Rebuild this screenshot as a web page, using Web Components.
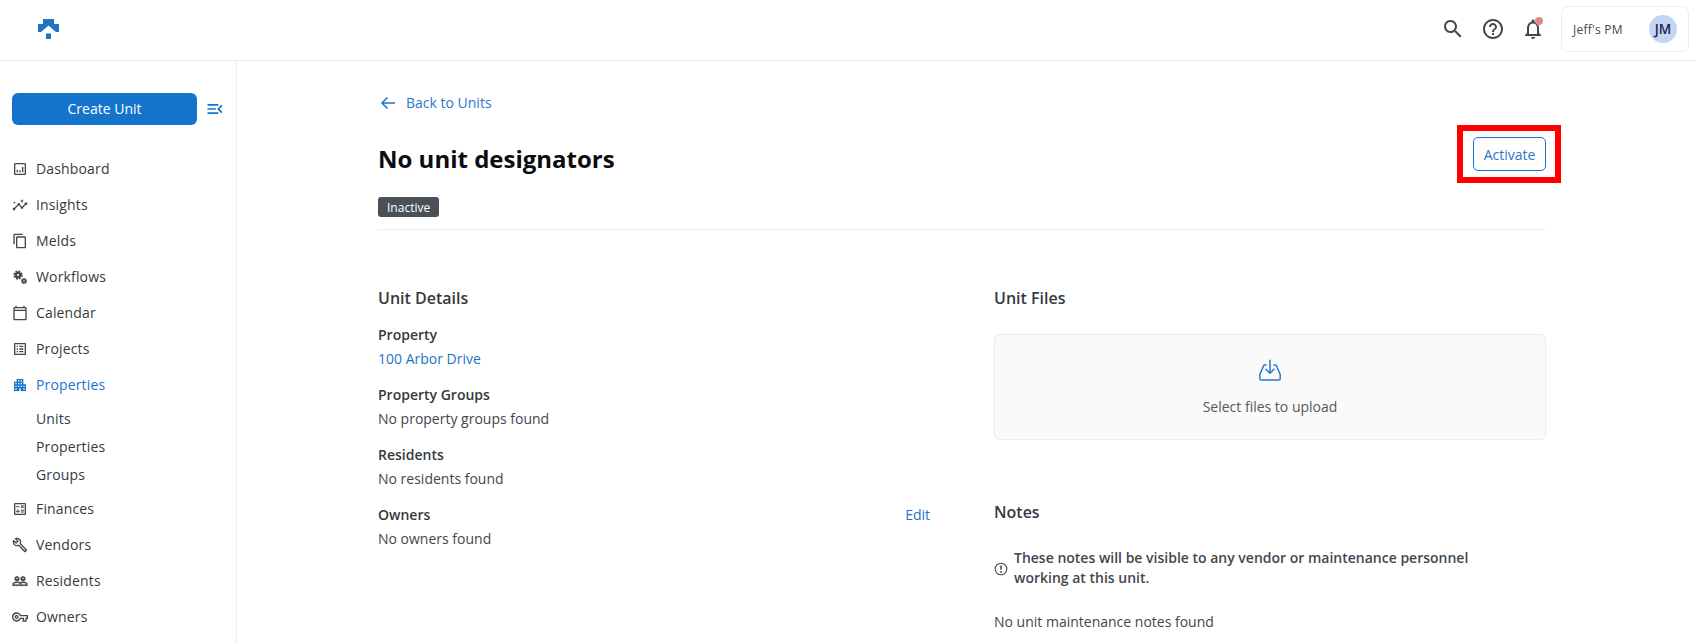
<!DOCTYPE html>
<html lang="en"><head><meta charset="utf-8"><title>Unit</title>
<style>
html,body{margin:0;padding:0;height:643px;overflow:hidden;background:#fff;font-family:"Open Sans",sans-serif;color:#343a40}
</style></head><body>
<app-shell></app-shell>
<template id="t-shell"><style>
:host{display:grid;grid-template-columns:237px 1fr;grid-template-rows:61px 582px;width:1696px;height:643px;overflow:hidden}
app-header{grid-column:1/3}
</style><app-header></app-header><app-sidebar></app-sidebar><unit-page></unit-page></template>

<template id="t-header"><style>
:host{display:flex;align-items:center;height:61px;box-sizing:border-box;border-bottom:1px solid #ebebeb;padding:0 7px 0 38px;background:#fff}
.logo{display:block;width:21px;height:21px;margin-top:-1px}
.sp{flex:1}
.icons{display:flex;gap:16px;margin:-2px 16px 0 0}
svg.i{display:block;fill:#42474d}
.b{position:relative;width:24px;height:24px}
.dot{position:absolute;left:14px;top:0;width:8px;height:8px;border-radius:50%;background:#e58585}
.user{width:128px;height:46px;box-sizing:border-box;border:1px solid #ececec;border-radius:7px;display:flex;align-items:center;justify-content:space-between;padding:0 11px 0 11px;font-size:12px;letter-spacing:.25px;color:#42474d;margin-top:-2px}
.av{width:28px;height:28px;border-radius:50%;background:#c5d4f2;color:#1a1f4f;font-weight:600;font-size:13.5px;letter-spacing:0;display:flex;align-items:center;justify-content:center}
</style>
<svg class="logo" viewBox="0 0 21 21"><path fill="#1e74c0" d="M5 5V0h11v5h5v8h-3l-7.500-6.500L3 13H0V5z"/><path fill="#1e74c0" d="M8 14.500h5V20H8z"/></svg>
<span class="sp"></span>
<div class="icons">
<svg class="i" width="24" height="24" viewBox="0 0 24 24"><path d="M15.500 14h-.79l-.28-.27C15.410 12.590 16 11.110 16 9.500 16 5.910 13.090 3 9.500 3S3 5.910 3 9.500 5.910 16 9.500 16c1.610 0 3.090-.59 4.230-1.570l.27.28v.79l5 4.990L20.490 19l-4.990-5zm-6 0C7.010 14 5 11.990 5 9.500S7.010 5 9.500 5 14 7.010 14 9.500 11.990 14 9.500 14z"/></svg>
<svg class="i" width="24" height="24" viewBox="0 0 24 24"><path d="M11 18h2v-2h-2v2zm1-16C6.480 2 2 6.480 2 12s4.480 10 10 10 10-4.480 10-10S17.520 2 12 2zm0 18c-4.410 0-8-3.590-8-8s3.590-8 8-8 8 3.590 8 8-3.590 8-8 8zm0-14c-2.210 0-4 1.790-4 4h2c0-1.100.9-2 2-2s2 .9 2 2c0 2-3 1.750-3 5h2c0-2.250 3-2.500 3-5 0-2.210-1.790-4-4-4z"/></svg>
<div class="b"><svg class="i" width="24" height="24" viewBox="0 0 24 24"><path d="M12 22c1.100 0 2-.9 2-2h-4c0 1.100.9 2 2 2zm6-6v-5c0-3.070-1.630-5.640-4.500-6.320V4c0-.83-.67-1.500-1.500-1.500s-1.500.67-1.500 1.500v.68C7.640 5.360 6 7.920 6 11v5l-2 2v1h16v-1l-2-2zm-2 1H8v-6c0-2.480 1.510-4.500 4-4.500s4 2.020 4 4.500v6z"/></svg><span class="dot"></span></div>
</div>
<div class="user"><span>Jeff's PM</span><span class="av">JM</span></div>
</template>

<template id="t-nav"><style>
:host{display:flex;align-items:center;height:36px;font-size:14px;line-height:20px;letter-spacing:.15px;font-weight:500;color:#343a40}
:host([active]){color:#1c74cc}
.ic{width:16px;height:16px;margin:0 8px 0 12px;flex:none;display:flex}
</style><span class="ic"><slot name="icon"></slot></span><slot></slot></template>

<template id="t-sub"><style>
:host{display:flex;align-items:center;height:28px;padding-left:36px;font-size:14px;line-height:20px;letter-spacing:.15px;font-weight:500;color:#343a40}
</style><slot></slot></template>

<template id="t-side"><style>
:host{display:block;border-right:1px solid #ebebeb;overflow:hidden;background:#fff}
.top{display:flex;align-items:center;margin:32px 0 26px 12px}
.btn{width:185px;height:32px;border-radius:6px;background:#1474cc;color:#fff;font-size:14px;line-height:20px;font-weight:500;display:flex;align-items:center;justify-content:center}
.col{margin-left:8px;display:block;fill:#1474cc}
svg{display:block}
.subs{margin:2px 0}
.ic{fill:#42474d}
</style>
<div class="top"><div class="btn">Create Unit</div>
<svg class="col" width="20" height="20" viewBox="0 0 24 24"><path d="M3 18h13v-2H3v2zm0-5h10v-2H3v2zm0-7v2h13V6H3zm18 9.590L17.420 12 21 8.410 19.590 7l-5 5 5 5L21 15.590z"/></svg></div>
<nav-item><svg slot="icon" class="ic" width="16" height="16" viewBox="0 0 24 24"><path d="M19 3H5c-1.100 0-2 .9-2 2v14c0 1.100.9 2 2 2h14c1.100 0 2-.9 2-2V5c0-1.100-.9-2-2-2zm0 16H5V5h14v14zM7 13h2v4H7zm4 1h2v3h-2zm4-5h2v8h-2z"/></svg>Dashboard</nav-item>
<nav-item><svg slot="icon" class="ic" width="16" height="16" viewBox="0 0 24 24"><path d="M21 8c-1.450 0-2.260 1.440-1.930 2.510l-3.550 3.560c-.3-.09-.74-.09-1.040 0l-2.550-2.550C12.270 10.450 11.460 9 10 9c-1.450 0-2.270 1.440-1.930 2.520l-4.560 4.550C2.440 15.740 1 16.550 1 18c0 1.100.9 2 2 2 1.450 0 2.260-1.440 1.930-2.510l4.550-4.560c.3.09.74.09 1.040 0l2.550 2.550C12.730 16.550 13.540 18 15 18c1.450 0 2.270-1.440 1.930-2.520l3.560-3.550c1.070.33 2.510-.48 2.510-1.930 0-1.100-.9-2-2-2z"/><path d="M15 9l.94-2.070L18 6l-2.060-.93L15 3l-.92 2.070L12 6l2.080.93zM3.500 11L4 9l2-.5L4 8l-.5-2L3 8l-2 .5L3 9z"/></svg>Insights</nav-item>
<nav-item><svg slot="icon" class="ic" width="16" height="16" viewBox="0 0 24 24"><path d="M16 1H4c-1.100 0-2 .9-2 2v14h2V3h12V1zm3 4H8c-1.100 0-2 .9-2 2v14c0 1.100.9 2 2 2h11c1.100 0 2-.9 2-2V7c0-1.100-.9-2-2-2zm0 16H8V7h11v14z"/></svg>Melds</nav-item>
<nav-item><svg slot="icon" width="16" height="16" viewBox="0 0 16 16"><g fill="none" stroke="#42474d"><circle cx="6" cy="6" r="3.800" stroke-width="1.700" stroke-dasharray="1.900 1.080"/><circle cx="12" cy="12" r="2.500" stroke-width="1.200" stroke-dasharray="1.200 .76"/></g><path fill="#42474d" fill-rule="evenodd" d="M6 2.800a3.200 3.200 0 1 0 0 6.400 3.200 3.200 0 0 0 0-6.400zm0 2.100a1.100 1.100 0 1 1 0 2.200 1.100 1.100 0 0 1 0-2.200zM12 9.800a2.200 2.200 0 1 0 0 4.400 2.200 2.200 0 0 0 0-4.400zm0 1.500a.7.7 0 1 1 0 1.400.7.7 0 0 1 0-1.400z"/></svg>Workflows</nav-item>
<nav-item><svg slot="icon" class="ic" width="16" height="16" viewBox="0 0 24 24"><path d="M20 3h-1V1h-2v2H7V1H5v2H4c-1.100 0-2 .9-2 2v16c0 1.100.9 2 2 2h16c1.100 0 2-.9 2-2V5c0-1.100-.9-2-2-2zm0 18H4V9h16v12zm0-14H4V5h16v2z"/></svg>Calendar</nav-item>
<nav-item><svg slot="icon" class="ic" width="16" height="16" viewBox="0 0 24 24"><path d="M19 5v14H5V5h14m1.100-2H3.900c-.5 0-.9.4-.9.9v16.200c0 .4.4.9.9.9h16.200c.4 0 .9-.5.9-.9V3.900c0-.5-.5-.9-.9-.9zM11 7h6v2h-6V7zm0 4h6v2h-6v-2zm0 4h6v2h-6zM7 7h2v2H7zm0 4h2v2H7zm0 4h2v2H7z"/></svg>Projects</nav-item>
<nav-item active><svg slot="icon" style="fill:#1474cc" width="16" height="16" viewBox="0 0 24 24"><path d="M17 11V3H7v4H3v14h8v-4h2v4h8V11h-4zM7 19H5v-2h2v2zm0-4H5v-2h2v2zm0-4H5V9h2v2zm4 4H9v-2h2v2zm0-4H9V9h2v2zm0-4H9V5h2v2zm4 8h-2v-2h2v2zm0-4h-2V9h2v2zm0-4h-2V5h2v2zm4 12h-2v-2h2v2zm0-4h-2v-2h2v2z"/></svg>Properties</nav-item>
<div class="subs"><sub-item>Units</sub-item><sub-item>Properties</sub-item><sub-item>Groups</sub-item></div>
<nav-item><svg slot="icon" class="ic" width="16" height="16" viewBox="0 0 24 24"><path d="M19 3H5c-1.100 0-2 .9-2 2v14c0 1.100.9 2 2 2h14c1.100 0 2-.9 2-2V5c0-1.100-.9-2-2-2zm0 16H5V5h14v14zM6.250 7.720h5v1.500h-5zM13 15.750h5v1.500h-5zm0-2.500h5v1.500h-5zM8 18h1.500v-2h2v-1.500h-2v-2H8v2H6V16h2zm6.090-7.050l1.410-1.410 1.410 1.410 1.060-1.060-1.410-1.420 1.410-1.410L16.910 6 15.500 7.410 14.090 6l-1.060 1.060 1.410 1.410-1.410 1.420z"/></svg>Finances</nav-item>
<nav-item><svg slot="icon" class="ic" width="16" height="16" viewBox="0 0 24 24"><path d="M22.610 18.990l-9.080-9.080c.93-2.340.45-5.100-1.440-7C9.790.61 6.210.4 3.660 2.260L7.500 6.110 6.080 7.520 2.250 3.690C.39 6.230.6 9.820 2.900 12.110c1.860 1.860 4.570 2.350 6.890 1.480l9.110 9.110c.39.39 1.020.39 1.410 0l2.300-2.300c.4-.38.4-1.010 0-1.410zm-3 1.600l-9.460-9.460c-.61.45-1.290.72-2 .82-1.360.2-2.790-.21-3.830-1.250C3.370 9.760 2.930 8.500 3 7.260l3.090 3.090 4.240-4.240-3.090-3.090c1.240-.07 2.490.37 3.440 1.310 1.080 1.080 1.490 2.570 1.240 3.960-.12.71-.42 1.370-.88 1.960l9.450 9.450-.88.88z"/></svg>Vendors</nav-item>
<nav-item><svg slot="icon" class="ic" width="16" height="16" viewBox="0 0 24 24" stroke="#42474d" stroke-width=".8"><path d="M16.500 13c-1.200 0-3.070.34-4.500 1-1.430-.67-3.300-1-4.500-1C5.330 13 1 14.080 1 16.250V19h22v-2.750c0-2.170-4.330-3.250-6.500-3.250zm-4 4.500h-10v-1.250c0-.54 2.560-1.750 5-1.750s5 1.210 5 1.750v1.250zm9 0H14v-1.250c0-.46-.2-.86-.52-1.220.88-.3 1.960-.53 3.020-.53 2.440 0 5 1.210 5 1.750v1.250zM7.500 12c1.930 0 3.500-1.570 3.500-3.500S9.430 5 7.500 5 4 6.570 4 8.500 5.570 12 7.500 12zm0-5.500c.83 0 1.500.67 1.500 1.500s-.67 1.500-1.500 1.500S6 9.330 6 8.500 6.670 7 7.500 7zm9 5.500c1.930 0 3.500-1.570 3.500-3.500S18.430 5 16.500 5 13 6.570 13 8.500s1.570 3.500 3.500 3.500zm0-5.500c.83 0 1.500.67 1.500 1.500s-.67 1.500-1.500 1.500S15 9.330 15 8.500 15.670 7 16.500 7z"/></svg>Residents</nav-item>
<nav-item><svg slot="icon" class="ic" width="16" height="16" viewBox="0 0 24 24"><path d="M22 19h-6v-4h-2.680c-1.140 2.420-3.600 4-6.320 4-3.860 0-7-3.140-7-7s3.140-7 7-7c2.720 0 5.170 1.580 6.320 4H24v6h-2v4zm-4-2h2v-4h2v-2H11.980l-.23-.67C11.050 8.340 9.150 7 7 7c-2.760 0-5 2.240-5 5s2.240 5 5 5c2.150 0 4.050-1.340 4.750-3.330l.23-.67H18v4zM7 15c-1.650 0-3-1.350-3-3s1.350-3 3-3 3 1.350 3 3-1.350 3-3 3zm0-4c-.55 0-1 .45-1 1s.45 1 1 1 1-.45 1-1-.45-1-1-1z"/></svg>Owners</nav-item>
</template>

<template id="t-field"><style>
:host{display:block;font-size:14px;color:#42474d}
.l{display:flex;justify-content:space-between;height:20px;line-height:20px;font-weight:600;color:#343a40;margin-bottom:4px}
.v{display:block;height:20px;line-height:20px;margin-bottom:16px}
::slotted(a){color:#1c74cc;text-decoration:none}
.l ::slotted(a){font-weight:400}
</style><div class="l"><span><slot name="label"></slot></span><slot name="action"></slot></div><span class="v"><slot></slot></span></template>

<template id="t-badge"><style>
:host{display:inline-flex;align-items:center;height:20px;padding:0 9px;border-radius:3px;background:#4a5058;color:#fff;font-size:12px;font-weight:500}
</style><slot></slot></template>

<template id="t-btn"><style>
:host{display:flex;align-items:center;justify-content:center;box-sizing:border-box;width:73px;height:34px;border:1px solid #1474cc;border-radius:5px;color:#2a78cc;font-size:14px;background:#fff}
</style><slot></slot></template>

<template id="t-page"><style>
:host{display:block;overflow:hidden;padding:0 150px 0 141px;background:#fff;position:relative}
.back{display:flex;align-items:center;height:20px;line-height:20px;margin-top:32px;font-size:14px;color:#2a78cc}
.back svg{margin:0 10px 0 2px;display:block}
.head{display:flex;justify-content:space-between;align-items:flex-start;margin-top:13px}
h1{margin:16px 0 0;font-size:24px;line-height:34px;font-weight:700;color:#0a0c0f}
.act{position:relative;margin-top:11px}
.red{position:absolute;left:-16px;top:-12px;width:104px;height:58px;box-sizing:border-box;border:6px solid #f00;pointer-events:none}
.badge{display:flex;margin-top:21px;padding-bottom:12px;border-bottom:1px solid #ebebeb}
.cols{display:grid;grid-template-columns:552px 552px;column-gap:64px;margin-top:57px}
h2{margin:0 0 16px;font-size:16px;line-height:22px;font-weight:600;color:#343a40}
h2.f{margin-bottom:25px}
.drop{height:106px;box-sizing:border-box;border:1px solid #ebebeb;border-radius:6px;background:#fafafa;display:flex;flex-direction:column;align-items:center;padding-top:24px;font-size:14px;line-height:20px;color:#54595f}
.drop svg{display:block;margin-bottom:14px}
h2.n{margin:61px 0 0}
.note{display:flex;align-items:center;margin-top:25px;width:490px;font-size:14px;line-height:20px;font-weight:600;color:#42474d}
.note svg{flex:none;margin-right:6px;margin-top:1px;display:block}
.none{margin-top:24px;font-size:14px;line-height:20px;color:#42474d}
</style>
<div class="back"><svg width="16" height="14" viewBox="0 0 16 14" fill="none" stroke="#1c74cc" stroke-width="1.500"><path d="M15 7H2M7.500 1.500 2 7l5.500 5.500"/></svg>Back to Units</div>
<div class="head"><h1>No unit designators</h1><div class="act"><outline-btn>Activate</outline-btn><div class="red"></div></div></div>
<div class="badge"><status-badge>Inactive</status-badge></div>
<div class="cols">
<section><h2>Unit Details</h2>
<unit-field><span slot="label">Property</span><a href="#">100 Arbor Drive</a></unit-field>
<unit-field><span slot="label">Property Groups</span>No property groups found</unit-field>
<unit-field><span slot="label">Residents</span>No residents found</unit-field>
<unit-field><span slot="label">Owners</span><a slot="action" href="#">Edit</a>No owners found</unit-field>
</section>
<section><h2 class="f">Unit Files</h2>
<div class="drop"><svg width="24" height="24" viewBox="0 0 24 24" fill="none" stroke="#2a78cc" stroke-width="1.500" stroke-linejoin="round" stroke-linecap="round"><path d="M8 6H6.800c-.6 0-1 .3-1.200.8L1.800 15.500v4a1.500 1.500 0 0 0 1.500 1.500h17.400a1.500 1.500 0 0 0 1.500-1.500v-4L18.400 6.800c-.2-.5-.6-.8-1.200-.8H16"/><path d="M12 1.200V14M8 10.200l4 4 4-4"/></svg>Select files to upload</div>
<h2 class="n">Notes</h2>
<div class="note"><svg width="14" height="14" viewBox="0 0 14 14" fill="none" stroke="#42474d" stroke-width="1.100"><circle cx="7" cy="7" r="5.800"/><path d="M7 3.600v4.200" stroke-width="1.500"/><circle cx="7" cy="10" r=".9" fill="#42474d" stroke="none"/></svg><span>These notes will be visible to any vendor or maintenance personnel working at this unit.</span></div>
<div class="none">No unit maintenance notes found</div>
</section></div>
</template>

<script>
const reg=(n,t)=>customElements.define(n,class extends HTMLElement{constructor(){super();this.attachShadow({mode:'open'}).appendChild(document.getElementById(t).content.cloneNode(true))}});
reg('status-badge','t-badge');reg('outline-btn','t-btn');reg('unit-field','t-field');reg('nav-item','t-nav');reg('sub-item','t-sub');
reg('app-header','t-header');reg('app-sidebar','t-side');reg('unit-page','t-page');reg('app-shell','t-shell');
</script></body></html>
